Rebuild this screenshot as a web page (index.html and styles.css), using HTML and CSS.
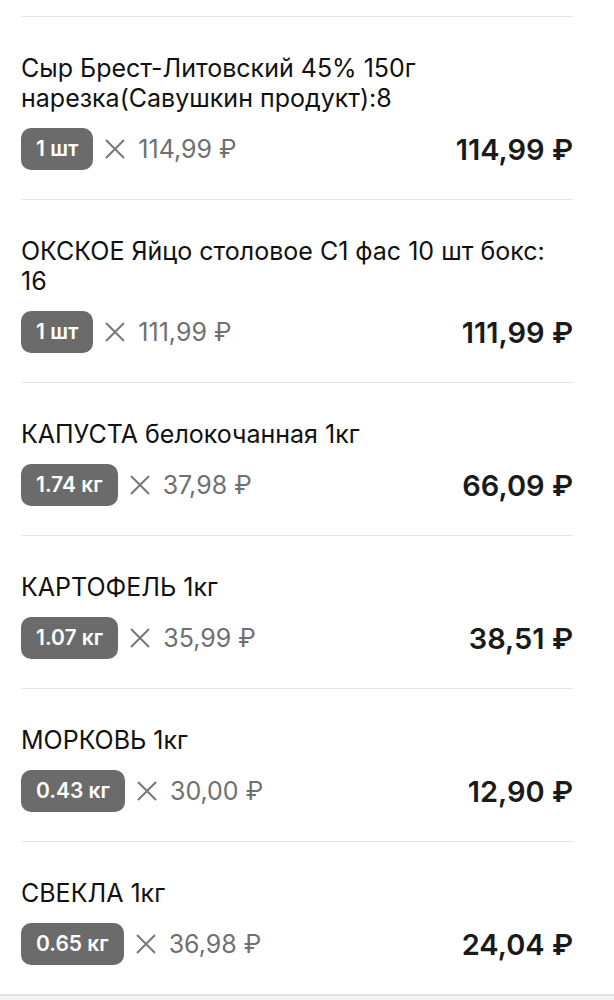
FILE: index.html
```html
<!DOCTYPE html>
<html lang="ru">
<head>
    <meta charset="UTF-8">
    <meta name="viewport" content="width=device-width, initial-scale=1.0">
    <title>Чек</title>
    <link rel="stylesheet" href="styles.css">
</head>
<body>
    <div class="receipt">
        <div class="item">
            <div class="item-name">Сыр Брест-Литовский 45% 150г нарезка(Савушкин продукт):8</div>
            <div class="item-row">
                <span class="qty">1 шт</span>
                <svg class="times" viewBox="0 0 22 22"><path d="M2 2 L20 20 M20 2 L2 20"/></svg>
                <span class="unit-price">114,99 ₽</span>
                <span class="total">114,99 ₽</span>
            </div>
        </div>
        <div class="item">
            <div class="item-name">ОКСКОЕ Яйцо столовое С1 фас 10 шт бокс: 16</div>
            <div class="item-row">
                <span class="qty">1 шт</span>
                <svg class="times" viewBox="0 0 22 22"><path d="M2 2 L20 20 M20 2 L2 20"/></svg>
                <span class="unit-price">111,99 ₽</span>
                <span class="total">111,99 ₽</span>
            </div>
        </div>
        <div class="item">
            <div class="item-name">КАПУСТА белокочанная 1кг</div>
            <div class="item-row">
                <span class="qty">1.74 кг</span>
                <svg class="times" viewBox="0 0 22 22"><path d="M2 2 L20 20 M20 2 L2 20"/></svg>
                <span class="unit-price">37,98 ₽</span>
                <span class="total">66,09 ₽</span>
            </div>
        </div>
        <div class="item">
            <div class="item-name">КАРТОФЕЛЬ 1кг</div>
            <div class="item-row">
                <span class="qty">1.07 кг</span>
                <svg class="times" viewBox="0 0 22 22"><path d="M2 2 L20 20 M20 2 L2 20"/></svg>
                <span class="unit-price">35,99 ₽</span>
                <span class="total">38,51 ₽</span>
            </div>
        </div>
        <div class="item">
            <div class="item-name">МОРКОВЬ 1кг</div>
            <div class="item-row">
                <span class="qty">0.43 кг</span>
                <svg class="times" viewBox="0 0 22 22"><path d="M2 2 L20 20 M20 2 L2 20"/></svg>
                <span class="unit-price">30,00 ₽</span>
                <span class="total">12,90 ₽</span>
            </div>
        </div>
        <div class="item">
            <div class="item-name">СВЕКЛА 1кг</div>
            <div class="item-row">
                <span class="qty">0.65 кг</span>
                <svg class="times" viewBox="0 0 22 22"><path d="M2 2 L20 20 M20 2 L2 20"/></svg>
                <span class="unit-price">36,98 ₽</span>
                <span class="total">24,04 ₽</span>
            </div>
        </div>
    </div>
    <div class="footer"></div>
</body>
</html>
```

FILE: styles.css
```css
body {
    margin: 0;
    background: #ffffff;
    font-family: Inter, "Noto Sans", Roboto, sans-serif;
    color: #111111;
}
.receipt {
    padding: 16px 41px 0 21px;
}
.item {
    border-top: 1px solid #e6e6e6;
    padding: 36px 0 29px;
}
.item-name {
    font-size: 25px;
    line-height: 30px;
}
.item-row {
    display: flex;
    align-items: center;
    margin-top: 15px;
    height: 42px;
}
.qty {
    background: #6b6b6b;
    color: #ffffff;
    font-size: 21px;
    font-weight: 600;
    height: 42px;
    line-height: 42px;
    padding: 0 15px;
    border-radius: 10px;
}
.times {
    width: 22px;
    height: 22px;
    margin: 0 12px 0 11px;
    stroke: #777777;
    stroke-width: 2;
    fill: none;
}
.unit-price {
    font-size: 25px;
    color: #707070;
}
.total {
    margin-left: auto;
    font-size: 29px;
    font-weight: 600;
    color: #1a1a1a;
}
.footer {
    border-top: 2px solid #e2e2e2;
    background: #f4f4f4;
    height: 20px;
}
```
